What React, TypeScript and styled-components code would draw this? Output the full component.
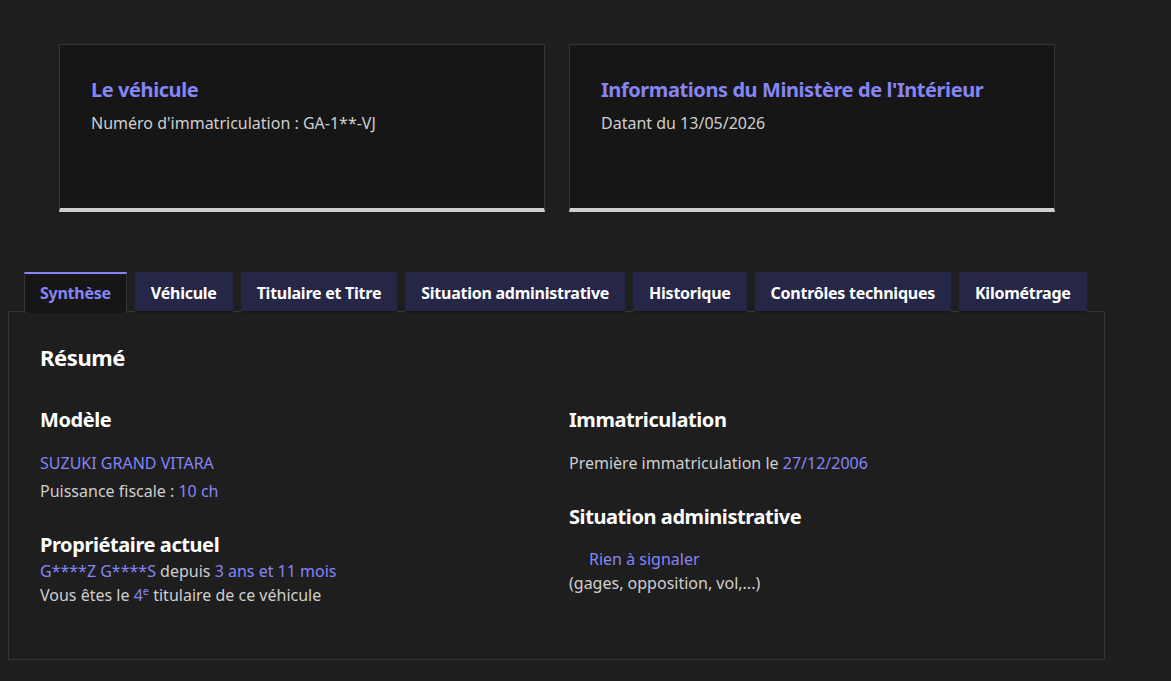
import React from "react";
import styled, { createGlobalStyle } from "styled-components";

const Global = createGlobalStyle`
  html, body { background: #1e1e1e; }
  body {
    margin: 8px;
    font-family: "Noto Sans", Lato, sans-serif;
    color: #cecece;
    -webkit-font-smoothing: antialiased;
  }
  * { box-sizing: border-box; }
`;

const Page = styled.div`
  width: 1097px;
  padding-top: 36px;
`;

const CardRow = styled.div`
  display: flex;
  justify-content: center;
  gap: 24px;
  padding-left: 1px;
`;

const Card = styled.div`
  width: 486px;
  height: 168px;
  background: #161616;
  border: 1px solid #353535;
  border-bottom: 4px solid #cecece;
  padding: 31px 32px 0 31px;
`;

const CardTitle = styled.h3`
  margin: 0 0 7px;
  font-size: 20px;
  line-height: 28px;
  font-weight: 700;
  letter-spacing: -0.42px;
  color: #8585f6;
`;

const CardText = styled.p`
  margin: 0;
  font-size: 16px;
  line-height: 24px;
  color: #cecece;
`;

const TabList = styled.div`
  display: flex;
  align-items: flex-start;
  gap: 8px;
  height: 39px;
  margin-top: 60px;
  padding-left: 16px;
  position: relative;
  z-index: 1;
`;

const Tab = styled.div<{ $active?: boolean }>`
  height: ${(p) => (p.$active ? "41px" : "39px")};
  padding: 0 15px ${(p) => (p.$active ? "2px" : "0")};
  display: flex;
  align-items: center;
  font-size: 16px;
  font-weight: 700;
  letter-spacing: -0.25px;
  white-space: nowrap;
  color: ${(p) => (p.$active ? "#8585f6" : "#ffffff")};
  background: ${(p) => (p.$active ? "#161616" : "#262647")};
  border-top: 2px solid ${(p) => (p.$active ? "#8585f6" : "#262647")};
  border-left: 1px solid ${(p) => (p.$active ? "#353535" : "#262647")};
  border-right: 1px solid ${(p) => (p.$active ? "#353535" : "#262647")};
  box-shadow: ${(p) => (p.$active ? "none" : "0 2px 0 #181818")};
`;

const Panel = styled.div`
  width: 1097px;
  height: 349px;
  border: 1px solid #353535;
  padding: 31px 31px;
`;

const Title = styled.h2`
  margin: 0;
  font-size: 22px;
  line-height: 28px;
  font-weight: 700;
  letter-spacing: -0.4px;
  color: #ffffff;
`;

const Columns = styled.div`
  display: grid;
  grid-template-columns: 529px 1fr;
  margin-top: 35px;
`;

const Col = styled.div`
  display: flex;
  flex-direction: column;
`;

const Heading = styled.h4<{ $gap?: number }>`
  margin: 0 0 ${(p) => p.$gap ?? 17}px;
  font-size: 20px;
  line-height: 28px;
  font-weight: 700;
  letter-spacing: -0.42px;
  color: #ffffff;
`;

const Line = styled.p<{ $after?: number; $indent?: number }>`
  margin: 0 0 ${(p) => p.$after ?? 0}px;
  padding-left: ${(p) => p.$indent ?? 0}px;
  font-size: 16px;
  line-height: 24px;
  color: #cecece;
`;

const Hl = styled.span`
  color: #8585f6;
`;

const Sup = styled.sup`
  font-size: 11px;
  line-height: 0;
  vertical-align: 6px;
`;

const tabs = [
  "Synthèse",
  "Véhicule",
  "Titulaire et Titre",
  "Situation administrative",
  "Historique",
  "Contrôles techniques",
  "Kilométrage",
];

export default function App() {
  return (
    <>
      <Global />
      <Page>
        <CardRow>
          <Card>
            <CardTitle>Le véhicule</CardTitle>
            <CardText>Numéro d'immatriculation : GA-1**-VJ</CardText>
          </Card>
          <Card>
            <CardTitle>Informations du Ministère de l'Intérieur</CardTitle>
            <CardText>Datant du 13/05/2026</CardText>
          </Card>
        </CardRow>
        <TabList>
          {tabs.map((t, i) => (
            <Tab key={t} $active={i === 0}>
              {t}
            </Tab>
          ))}
        </TabList>
        <Panel>
          <Title>Résumé</Title>
          <Columns>
            <Col>
              <Heading>Modèle</Heading>
              <Line $after={4}>
                <Hl>SUZUKI GRAND VITARA</Hl>
              </Line>
              <Line $after={28}>
                Puissance fiscale : <Hl>10 ch</Hl>
              </Line>
              <Heading $gap={0}>Propriétaire actuel</Heading>
              <Line>
                <Hl>G****Z G****S</Hl> depuis <Hl>3 ans et 11 mois</Hl>
              </Line>
              <Line>
                Vous êtes le{" "}
                <Hl>
                  4<Sup>e</Sup>
                </Hl>{" "}
                titulaire de ce véhicule
              </Line>
            </Col>
            <Col>
              <Heading>Immatriculation</Heading>
              <Line $after={28}>
                Première immatriculation le <Hl>27/12/2006</Hl>
              </Line>
              <Heading $gap={16}>Situation administrative</Heading>
              <Line $indent={20}>
                <Hl>Rien à signaler</Hl>
              </Line>
              <Line>(gages, opposition, vol,...)</Line>
            </Col>
          </Columns>
        </Panel>
      </Page>
    </>
  );
}
